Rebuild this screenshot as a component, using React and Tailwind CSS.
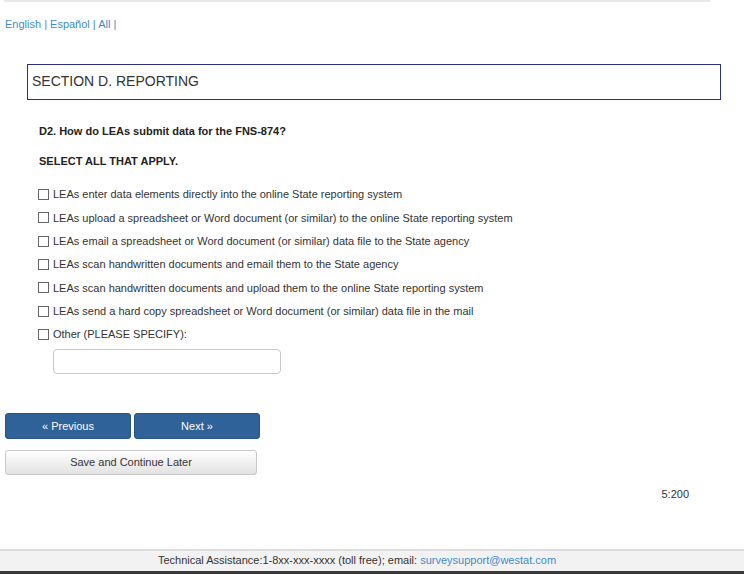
import React from "react";

const options = [
  "LEAs enter data elements directly into the online State reporting system",
  "LEAs upload a spreadsheet or Word document (or similar) to the online State reporting system",
  "LEAs email a spreadsheet or Word document (or similar) data file to the State agency",
  "LEAs scan handwritten documents and email them to the State agency",
  "LEAs scan handwritten documents and upload them to the online State reporting system",
  "LEAs send a hard copy spreadsheet or Word document (or similar) data file in the mail",
  "Other (PLEASE SPECIFY):",
];

export default function App() {
  return (
    <div
      className="w-[744px] h-[574px] bg-white text-[#333] overflow-hidden flex flex-col"
      style={{ fontFamily: '"Liberation Sans", Arial, sans-serif' }}
    >
      <div className="ml-[4px] w-[706px] h-[2px] bg-[#e8e8e8]" />
      <div className="mt-[15px] ml-[5px] text-[11px] leading-[14px] text-[#428bca]">
        English | Español | All |
      </div>
      <div className="mt-[33px] ml-[27px] w-[694px] h-[36px] border border-[#2a2f7f] flex items-center pl-[4px] text-[14px] text-[#333]">
        SECTION D. REPORTING
      </div>
      <div className="ml-[39px] mt-[24px] text-[11px] leading-[14px] font-bold text-[#222]">
        D2. How do LEAs submit data for the FNS-874?
      </div>
      <div className="ml-[39px] mt-[16px] text-[11px] leading-[14px] font-bold text-[#222]">
        SELECT ALL THAT APPLY.
      </div>
      <div className="mt-[15px] ml-[38px] flex flex-col">
        {options.map((o) => (
          <label key={o} className="h-[23.33px] flex items-center text-[11px] text-[#333]">
            <span className="w-[11px] h-[11px] border border-[#666] bg-white mr-[4px] shrink-0" />
            {o}
          </label>
        ))}
      </div>
      <div className="ml-[53px] mt-[3px] w-[228px] h-[25px] rounded-[4px] border border-[#c8c8c8] bg-white" />
      <div className="ml-[5px] mt-[39px] flex gap-[3px]">
        <button className="w-[126px] h-[26px] rounded-[3px] bg-[#2e6298] border border-[#285585] text-white text-[11px]">
          « Previous
        </button>
        <button className="w-[126px] h-[26px] rounded-[3px] bg-[#2e6298] border border-[#285585] text-white text-[11px]">
          Next »
        </button>
      </div>
      <button className="ml-[5px] mt-[11px] w-[252px] h-[25px] rounded-[3px] border border-[#c8c8c8] bg-gradient-to-b from-white to-[#e2e2e2] text-[11px] text-[#333]">
        Save and Continue Later
      </button>
      <div className="mt-[12px] w-[689px] text-right text-[11px] leading-[14px] text-[#333]">
        5:200
      </div>
      <div className="mt-[48px] h-[22px] w-full border-t-2 border-[#dcdcdc] bg-[#f2f2f2] flex items-center justify-center pr-[30px] pb-[1px] text-[11px] text-[#333]">
        Technical Assistance:1-8xx-xxx-xxxx (toll free); email:&nbsp;
        <span className="text-[#428bca]">surveysupport@westat.com</span>
      </div>
      <div className="h-[3px] w-full bg-[#3a3a3a]" />
    </div>
  );
}
